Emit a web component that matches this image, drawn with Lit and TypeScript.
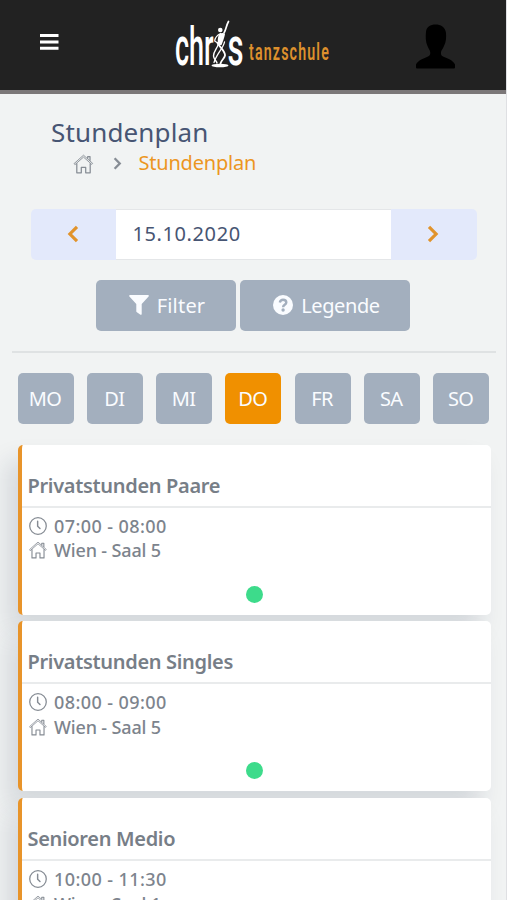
import { LitElement, html, css, svg } from "lit";
import { customElement, property } from "lit/decorators.js";
import { classMap } from "lit/directives/class-map.js";

const chevron = (dir: "left" | "right", cls: string) => html`<svg class=${cls} viewBox="0 0 12 18">
  <path d=${dir === "left" ? "M10 1.8 2.9 9 10 16.2" : "M2 1.8 9.1 9 2 16.2"} fill="none" stroke="currentColor" stroke-width="3.2" />
</svg>`;

const house = (cls: string) => html`<svg class=${cls} viewBox="0 0 20 20" fill="none" stroke="currentColor" stroke-width="1.25" stroke-linejoin="round" stroke-linecap="round">
  <path d="M.8 9.4 10 1.2l9.2 8.2-.9 1L10 3.1l-8.3 7.3z" stroke-width=".9" />
  <path d="M3.3 9.5v9.3h4.5v-5.4h4.4v5.4h4.5V9.5M14.2 4.3V2.5h2.3v3.8" />
</svg>`;

const clock = html`<svg class="ico" viewBox="0 0 20 20" fill="none" stroke="currentColor" stroke-width="1.4" stroke-linecap="round">
  <circle cx="10" cy="10" r="9.2" /><path d="M9.6 4.6v5.6l2.6 2.6" stroke-width="1.6" />
</svg>`;

@customElement("lesson-card")
export class LessonCard extends LitElement {
  @property() name = "";
  @property() time = "";
  @property() room = "";

  static styles = css`
    :host {
      display: block;
      box-sizing: border-box;
      height: 170px;
      border-left: 4.5px solid #e8942a;
      border-radius: 5px;
      background: #fff;
      color: #7d848d;
      box-shadow: -11px 16px 24px rgba(25, 42, 70, 0.13);
    }
    .head {
      box-sizing: border-box;
      height: 63px;
      padding: 20px 0 0 6px;
      border-bottom: 2px solid #e9ebec;
      font-size: 20px;
      line-height: 42px;
      font-weight: 600;
      letter-spacing: -0.32px;
      color: #777e87;
      white-space: nowrap;
    }
    .row {
      display: flex;
      align-items: center;
      gap: 7px;
      height: 24.5px;
      padding-left: 7.5px;
      font-size: 18px;
      font-weight: 480;
      white-space: nowrap;
    }
    .time { padding-top: 6px; letter-spacing: 0.42px; }
    .room { letter-spacing: -0.15px; }
    .ico { width: 18px; height: 18px; flex: none; color: #858b93; }
    .dot {
      width: 17px;
      height: 17px;
      margin: 23px 0 0 224.5px;
      border-radius: 50%;
      background: #3ddb8b;
    }
  `;

  render() {
    return html`
      <div class="head">${this.name}</div>
      <div class="row time">${clock}<span>${this.time}</span></div>
      <div class="row room">${house("ico")}<span>${this.room}</span></div>
      <div class="dot"></div>
    `;
  }
}

@customElement("app-root")
export class AppRoot extends LitElement {
  static styles = css`
    :host {
      display: block;
      box-sizing: border-box;
      height: 900px;
      overflow: hidden;
      background: #f1f3f3;
      border-right: 1px solid #dfe0e3;
      font-family: "Noto Sans", sans-serif;
      font-weight: 450;
      color: #475573;
    }
    header {
      display: flex;
      align-items: center;
      box-sizing: border-box;
      height: 94px;
      background: #222;
      border-bottom: 4px solid #7b7778;
    }
    .menu { width: 20px; height: 18px; margin: 0 0 6px 39px; }
    .logo { width: 160px; height: 80px; margin-left: 114px; }
    .logo text { font-family: Roboto, sans-serif; }
    .avatar { width: 39px; height: 46px; margin: 2px 0 0 83px; }
    h1 {
      margin: 22px 0 0 51px;
      font-size: 26px;
      line-height: 33px;
      font-weight: 450;
      letter-spacing: 0.15px;
    }
    .crumbs {
      display: flex;
      align-items: center;
      height: 29px;
      margin-left: 73px;
      font-size: 20px;
      color: #878d95;
    }
    .crumbs .home { width: 21px; height: 20px; }
    .crumbs .sep { width: 9px; height: 13px; margin: 0 16.5px 0 19px; }
    .crumbs span { color: #ec961f; letter-spacing: -0.2px; margin-top: -2px; }
    .date {
      display: grid;
      grid-template-columns: 85px 1fr 86px;
      width: 446px;
      height: 51px;
      margin: 31px 0 0 31px;
      border-radius: 5px;
      overflow: hidden;
      background: #e3e9fb;
    }
    .step { display: flex; align-items: center; justify-content: center; color: #e1932b; padding: 0 2px 2px 0; }
    .step svg { width: 12px; height: 18px; }
    .value {
      box-sizing: border-box;
      padding-left: 16.5px;
      border: solid #e4e6e8;
      border-width: 1px 0;
      background: #fff;
      font-size: 20px;
      line-height: 48px;
      letter-spacing: 0.6px;
    }
    .tools { display: flex; gap: 4px; margin: 20px 0 0 96px; }
    .btn {
      display: flex;
      align-items: center;
      justify-content: center;
      box-sizing: border-box;
      height: 51px;
      border-radius: 5px;
      background: #a3afbe;
      color: #fafcff;
      font-size: 20px;
      padding-bottom: 1px;
    }
    .filter { width: 140px; gap: 8px; padding-left: 2px; letter-spacing: 0.2px; }
    .legend { width: 170px; gap: 8px; padding-left: 3px; letter-spacing: -0.4px; }
    .btn svg { width: 20px; height: 20px; flex: none; }
    .rule { height: 1.5px; margin: 20px 10px 0 12px; background: #dfe2e3; }
    .days { display: grid; grid-template-columns: repeat(7, 56px); justify-content: space-between; margin: 20.5px 17px 0 17.5px; }
    .day { letter-spacing: -0.7px; padding-right: 1px; }
    .active { background: #f09000; }
    .list { display: grid; gap: 6.7px; width: 473px; margin: 20.5px 0 0 17.5px; }
  `;

  private days = ["MO", "DI", "MI", "DO", "FR", "SA", "SO"];
  private lessons = [
    { name: "Privatstunden Paare", time: "07:00 - 08:00", room: "Wien - Saal 5" },
    { name: "Privatstunden Singles", time: "08:00 - 09:00", room: "Wien - Saal 5" },
    { name: "Senioren Medio", time: "10:00 - 11:30", room: "Wien - Saal 1" },
  ];

  private dancer = svg`
    <g fill="none" stroke="#fff" stroke-linecap="round">
      <path d="M57 2.500C54.500 7 55 9.500 52.500 14" stroke-width="1.700" />
      <path d="M49 14.500c-3 1.500-5.500 4.500-5.800 7.500l3.300 2.200" stroke-width="1.200" />
      <path d="M47 24c-.5 5-5 8-5 13 0 3 3 5 3.500 7" stroke-width="1.400" />
      <path d="M46 24c3 5 8 8.500 7.500 12.500-.5 3-4 5-4.500 8" stroke-width="1.800" />
      <path d="M53 23c-1 6-8 12-10.500 20.500" stroke-width="1.300" />
    </g>
    <path d="M47.500 15.500q3.500-2.500 6-.5c-.5 3-2 7-3.500 11h-3.500q-1-6 1-10.500z" fill="#fff" />
    <circle cx="48.800" cy="11" r="2.300" fill="#fff" />
    <ellipse cx="48.500" cy="46.500" rx="8.500" ry="1.700" fill="#fff" />`;

  render() {
    return html`
      <header>
        <svg class="menu" viewBox="0 0 20 18"><path d="M1 2.500h18.500M1 9h18.500M1 15.300h18.500" stroke="#fff" stroke-width="3" /></svg>
        <svg class="logo" viewBox="0 -14 160 80">
          <text transform="translate(2 45.500) scale(.51 1)" fill="#fff" font-size="53" font-weight="500">chr</text>
          <text transform="translate(54.500 45.500) scale(.59 1)" fill="#fff" font-size="53" font-weight="500">s</text>
          <g transform="translate(-1.500 0)">${this.dancer}</g>
          <text transform="translate(76 41) scale(.58 1)" fill="#dd902d" font-size="24.500" font-weight="600" letter-spacing="2">tanzschule</text>
        </svg>
        <svg class="avatar" viewBox="0 0 39 46">
          <path d="M10 9C10.500 3.500 14.500 1.500 19.500 1.500S29.500 4 30 10c.3 4 .3 9-2 13-1 2.500-2.500 4-3 6-.2 2 0 3.500 2 4.500 4.500 2 10 3.500 12 8v3q0 1-1 1H1q-1 0-1-1v-3c2-4.500 8-6 12-8 2-1 2.500-2.500 2.200-4.500-.4-2-1.700-3.500-2.700-6C9.500 19 9.500 13 10 9z" fill="#000" />
        </svg>
      </header>
      <h1>Stundenplan</h1>
      <nav class="crumbs">${house("home")}${chevron("right", "sep")}<span>Stundenplan</span></nav>
      <div class="date">
        <div class="step">${chevron("left", "")}</div>
        <div class="value">15.10.2020</div>
        <div class="step">${chevron("right", "")}</div>
      </div>
      <div class="tools">
        <div class="btn filter">
          <svg viewBox="0 0 20 20"><path d="M.8 0h18.400q1.200.6.400 1.600L12.700 9v10.200q-.6 1-1.600.4L7.600 17q-.3-.3-.3-.8V9L.4 1.600Q-.3.600.8 0z" fill="currentColor" /></svg>
          <span>Filter</span>
        </div>
        <div class="btn legend">
          <svg viewBox="0 0 20 20"><circle cx="10" cy="10" r="10" fill="currentColor" /><path d="M6.800 7.500C7.300 5.500 8.400 4.700 10 4.700c2 0 3.300 1.200 3.300 2.800 0 2.300-3.200 2.300-3.200 4.700" fill="none" stroke="#a3afbe" stroke-width="2.400" /><circle cx="10.100" cy="15" r="1.700" fill="#a3afbe" /></svg>
          <span>Legende</span>
        </div>
      </div>
      <div class="rule"></div>
      <div class="days">
        ${this.days.map((d) => html`<div class=${classMap({ btn: true, day: true, active: d === "DO" })}>${d}</div>`)}
      </div>
      <div class="list">
        ${this.lessons.map((l) => html`<lesson-card .name=${l.name} .time=${l.time} .room=${l.room}></lesson-card>`)}
      </div>
    `;
  }
}
